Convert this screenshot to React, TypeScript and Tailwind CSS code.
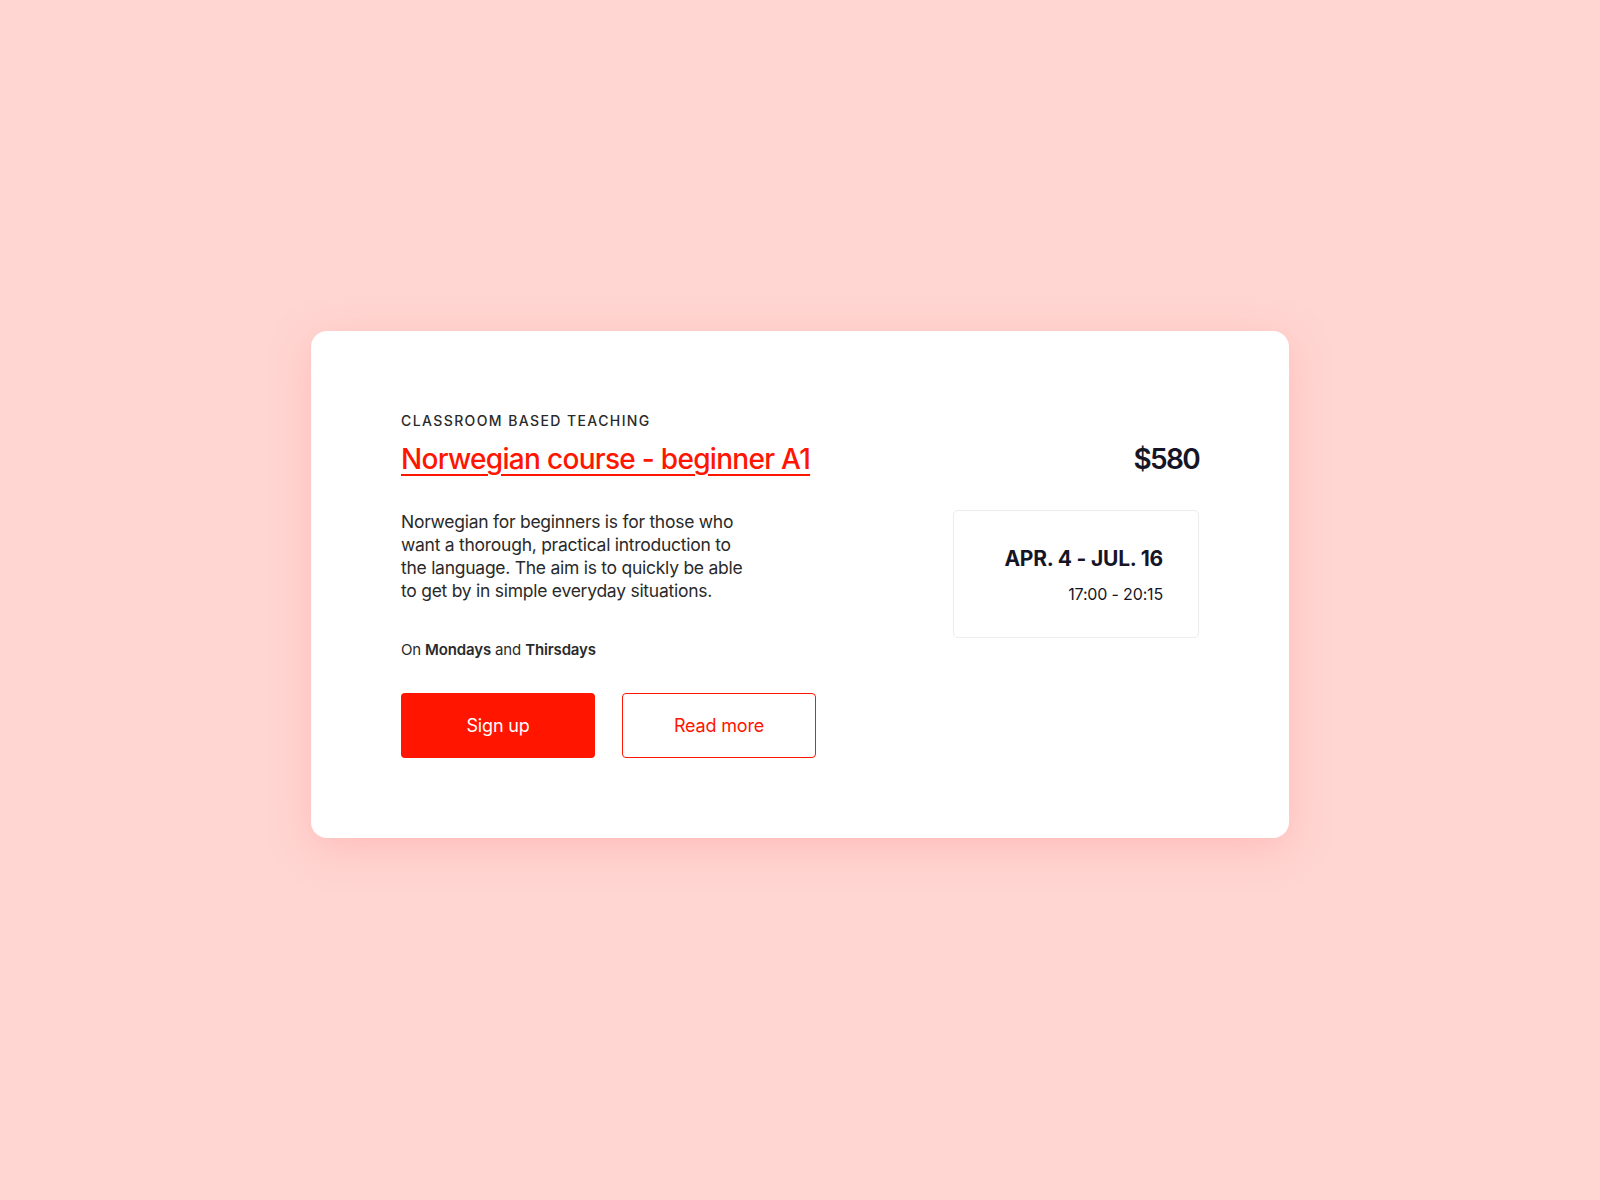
import { useState } from 'react';

const FONT = "font-['Inter','Liberation_Sans',sans-serif]";

function DateBox() {
  return (
    <div className="w-[246px] h-[128px] border border-[#ececec] rounded-[5px] flex flex-col items-end justify-center pr-[35px] pt-[3px] mt-[3px]">
      <div className="text-[21px] leading-[26px] font-bold tracking-[-0.01em] text-[#161526]">APR. 4 - JUL. 16</div>
      <div className="mt-[12px] text-[16px] leading-[20px] tracking-[-0.01em] text-[#161526]">17:00 - 20:15</div>
    </div>
  );
}

export default function App() {
  const [hover, setHover] = useState(false);

  return (
    <div className={`min-h-screen w-full bg-[#ffd6d2] flex items-center justify-center pb-[32px] ${FONT}`}>
      <div className="w-[978px] bg-white rounded-[16px] shadow-[0_10px_40px_rgba(255,140,140,0.35)] px-[90px] pt-[80px] pb-[80px]">
        <div className="text-[14px] leading-[20px] tracking-[0.1em] font-medium text-[#2a2a2a]">
          CLASSROOM BASED TEACHING
        </div>

        <div className="flex items-baseline justify-between mt-[10px]">
          <a
            href="#"
            onMouseEnter={() => setHover(true)}
            onMouseLeave={() => setHover(false)}
            className={`text-[28px] leading-[36px] font-medium tracking-[-0.025em] text-[#ff1500] underline decoration-2 underline-offset-[5px] ${hover ? 'opacity-90' : ''}`}
          >
            Norwegian course - beginner A1
          </a>
          <div className="text-[28px] leading-[36px] font-semibold tracking-[-0.06em] text-[#161526]">$580</div>
        </div>

        <div className="flex justify-between mt-[30px]">
          <div>
            <p className="w-[352px] mt-[3px] text-[17.5px] leading-[23px] tracking-[-0.015em] text-[#2a2a2a]">
              Norwegian for beginners is for those who want a thorough, practical introduction to the
              language. The aim is to quickly be able to get by in simple everyday situations.
            </p>
            <p className="mt-[38px] text-[15px] leading-[20px] tracking-[-0.01em] text-[#2a2a2a]">
              On <span className="font-semibold">Mondays</span> and{' '}
              <span className="font-semibold">Thirsdays</span>
            </p>
            <div className="flex gap-[27px] mt-[33px]">
              <button className="w-[194px] h-[65px] rounded-[4px] bg-[#ff1500] text-white text-[18px] tracking-[-0.01em]">
                Sign up
              </button>
              <button className="w-[194px] h-[65px] rounded-[4px] border border-[#ff1500] text-[#ff1500] text-[18px] tracking-[-0.01em] bg-white">
                Read more
              </button>
            </div>
          </div>
          <DateBox />
        </div>
      </div>
    </div>
  );
}
